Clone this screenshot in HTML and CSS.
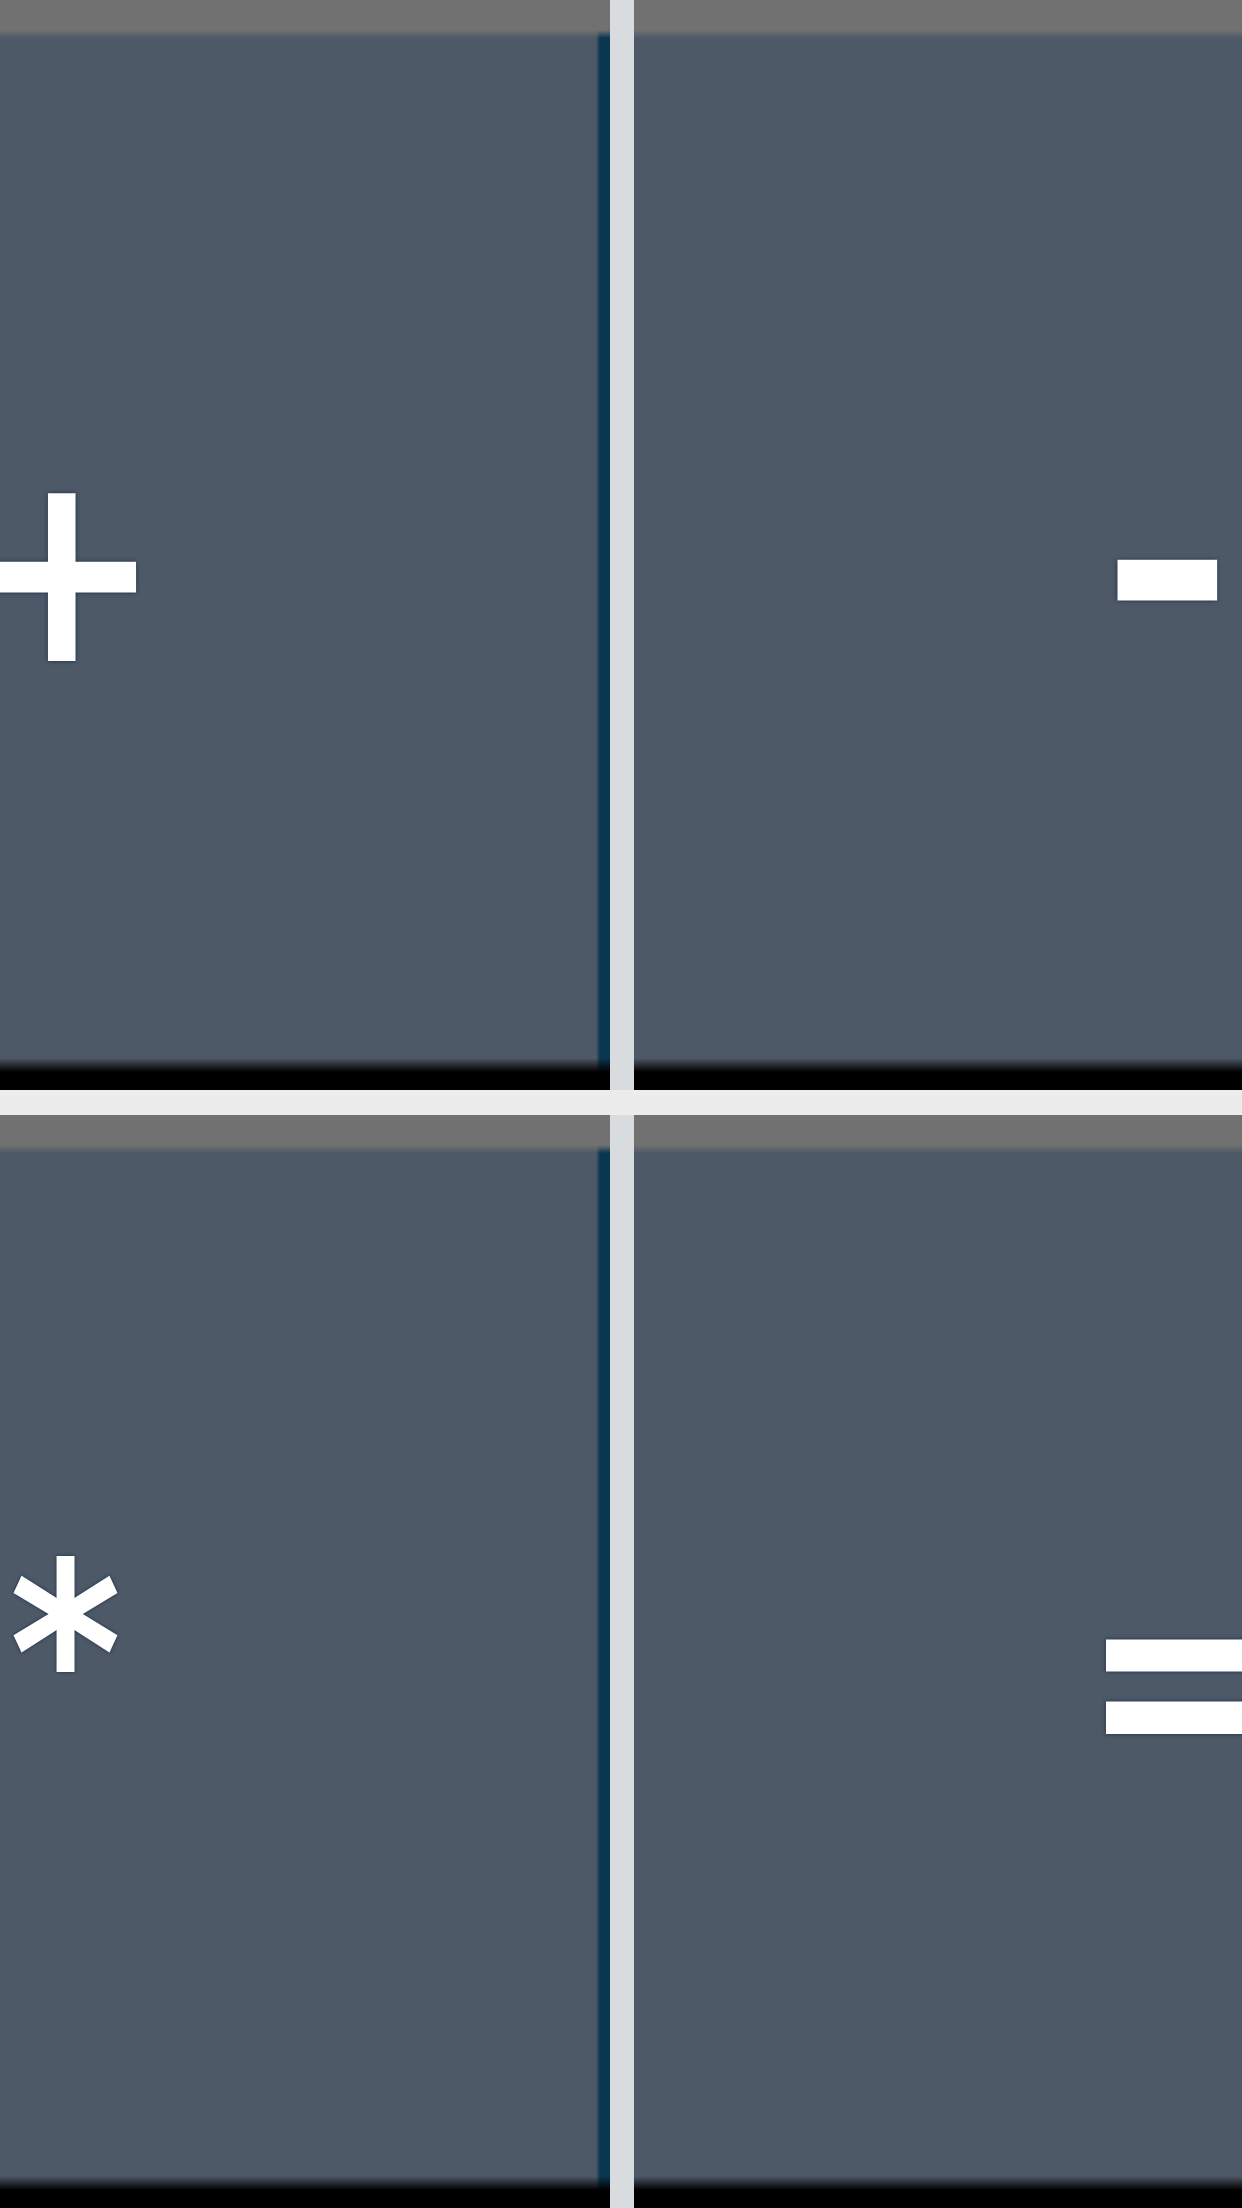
FILE: index.html
```html
<!DOCTYPE html>
<html lang="en">
<head>
<meta charset="utf-8">
<title>Calculator keys</title>
<link rel="stylesheet" href="styles.css">
</head>
<body>
<main class="pad">
  <button class="key key-left"><span class="glyph glyph-plus">+</span></button>
  <button class="key key-right"><span class="glyph glyph-minus">-</span></button>
  <div class="row-divider"></div>
  <button class="key key-left key-bottom"><span class="glyph glyph-times">*</span></button>
  <button class="key key-right key-bottom"><span class="glyph glyph-equals">=</span></button>
</main>
</body>
</html>
```

FILE: styles.css
```css
html, body {
  margin: 0;
  padding: 0;
  width: 1242px;
  height: 2208px;
  overflow: hidden;
  background: #dcdfe2;
}

.pad {
  display: grid;
  grid-template-columns: 610px 1fr;
  grid-template-rows: 1090px 25px 1fr;
  column-gap: 24px;
  width: 1242px;
  height: 2208px;
  background: #d9dcdf;
}

.key {
  margin: 0;
  border: 0;
  padding: 50px 0 0 0;
  display: flex;
  align-items: center;
  overflow: hidden;
  color: #ffffff;
  font-family: "DejaVu Sans", sans-serif;
  font-weight: bold;
  font-size: 250px;
  line-height: 1;
  background:
    linear-gradient(to bottom,
      #717171 0, #717171 30px, rgba(78,89,103,0) 38px,
      rgba(78,89,103,0) calc(100% - 32px), #000 calc(100% - 18px), #000 100%),
    #4e5967;
}

.key-left {
  justify-content: flex-start;
  background:
    linear-gradient(to bottom,
      #717171 0, #717171 30px, rgba(78,89,103,0) 38px,
      rgba(78,89,103,0) calc(100% - 32px), #000 calc(100% - 18px), #000 100%),
    linear-gradient(to right, rgba(11,54,80,0) calc(100% - 14px), #0b3650 calc(100% - 10px), #0b3650 100%),
    #4e5967;
}

.key-right {
  justify-content: flex-end;
}

.row-divider {
  grid-column: 1 / -1;
  background: #ececec;
}

.glyph {
  display: block;
  text-shadow: 0 0 4px rgba(10, 40, 70, 0.85);
}

.glyph-plus {
  margin-left: -43px;
  transform: translateY(-1px) scale(0.95, 1.07);
}

.glyph-minus {
  margin-right: 7px;
  transform: translateY(-6px) scale(1.3, 1.15);
  transform-origin: right center;
}

.glyph-times {
  margin-left: 0;
  transform: translateY(-32px) scaleX(0.86);
}

.glyph-equals {
  margin-right: -47px;
  transform: translateY(-9px) scaleY(1.12);
}
```
